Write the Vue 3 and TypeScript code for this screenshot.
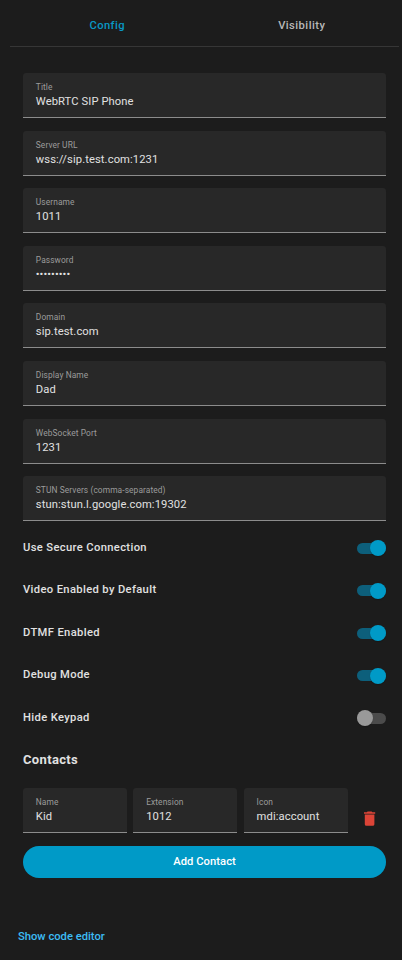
<script setup lang="ts">
import { reactive, ref } from 'vue'

interface Field { label: string; value: string; password?: boolean }
interface Toggle { label: string; on: boolean }

const tabs = ['Config', 'Visibility']
const activeTab = ref('Config')

const fields: Field[] = [
  { label: 'Title', value: 'WebRTC SIP Phone' },
  { label: 'Server URL', value: 'wss://sip.test.com:1231' },
  { label: 'Username', value: '1011' },
  { label: 'Password', value: '•••••••••', password: true },
  { label: 'Domain', value: 'sip.test.com' },
  { label: 'Display Name', value: 'Dad' },
  { label: 'WebSocket Port', value: '1231' },
  { label: 'STUN Servers (comma-separated)', value: 'stun:stun.l.google.com:19302' },
]

const toggles = reactive<Toggle[]>([
  { label: 'Use Secure Connection', on: true },
  { label: 'Video Enabled by Default', on: true },
  { label: 'DTMF Enabled', on: true },
  { label: 'Debug Mode', on: true },
  { label: 'Hide Keypad', on: false },
])

const contact: Field[] = [
  { label: 'Name', value: 'Kid' },
  { label: 'Extension', value: '1012' },
  { label: 'Icon', value: 'mdi:account' },
]
</script>

<template>
  <main class="editor">
    <nav class="tabs">
      <button
        v-for="tab in tabs"
        :key="tab"
        class="tab"
        :class="{ active: tab === activeTab }"
        @click="activeTab = tab"
      >{{ tab }}</button>
    </nav>

    <section class="form">
      <div class="fields">
        <div v-for="f in fields" :key="f.label" class="field">
          <span class="label">{{ f.label }}</span>
          <span class="value" :class="{ password: f.password }">{{ f.value }}</span>
        </div>
      </div>

      <div class="toggles">
        <div v-for="t in toggles" :key="t.label" class="toggle-row">
          <span class="toggle-label">{{ t.label }}</span>
          <button class="switch" :class="{ on: t.on }" :aria-label="t.label" @click="t.on = !t.on">
            <span class="knob"></span>
          </button>
        </div>
      </div>

      <h3 class="heading">Contacts</h3>
      <div class="contact">
        <div v-for="f in contact" :key="f.label" class="field">
          <span class="label">{{ f.label }}</span>
          <span class="value">{{ f.value }}</span>
        </div>
        <button class="delete" aria-label="Delete">
          <svg viewBox="0 0 24 24">
            <path d="M19,4H15.5L14.5,3H9.5L8.5,4H5V6H19M6,19A2,2 0 0,0 8,21H16A2,2 0 0,0 18,19V7H6V19Z" />
          </svg>
        </button>
      </div>
      <button class="add">Add Contact</button>
    </section>

    <button class="code-link">Show code editor</button>
  </main>
</template>

<style>
body {
  background: #1c1c1c;
}
</style>

<style scoped>
.editor {
  box-sizing: border-box;
  width: 402px;
  height: 960px;
  overflow: hidden;
  background: #1c1c1c;
  color: #e1e1e1;
  font-family: Roboto, sans-serif;
  font-size: 11.2px;
}

button {
  margin: 0;
  padding: 0;
  border: 0;
  background: none;
  font: inherit;
  color: inherit;
}

.tabs {
  display: flex;
  box-sizing: border-box;
  height: 47px;
  margin: 0 3px 0 10px;
  padding-top: 5px;
  border-bottom: 1px solid #363636;
}

.tab {
  flex: 1;
  font-weight: 500;
  letter-spacing: 0.45px;
  color: #b8b8b8;
}

.tab.active {
  color: #0998c5;
}

.form {
  padding: 26px 16px 0 23px;
}

.fields {
  display: flex;
  flex-direction: column;
  gap: 12.6px;
}

.field {
  display: flex;
  flex-direction: column;
  box-sizing: border-box;
  height: 45px;
  padding: 8px 12.8px 0;
  background: #282828;
  border-bottom: 1px solid #8c8c8c;
  border-radius: 3.2px 3.2px 0 0;
}

.label {
  font-size: 8.4px;
  line-height: 12px;
  letter-spacing: 0.09px;
  color: #9b9b9b;
}

.value {
  padding-top: 1px;
  line-height: 16px;
  letter-spacing: 0.1px;
}

.password {
  letter-spacing: 0.05px;
}

.toggles {
  padding-top: 5.9px;
}

.toggle-row {
  display: flex;
  align-items: center;
  justify-content: space-between;
  height: 42.5px;
}

.toggle-label {
  font-weight: 500;
  letter-spacing: 0.36px;
  padding-bottom: 2.4px;
}

.switch {
  display: flex;
  align-items: center;
  width: 28.8px;
  height: 11.2px;
  border-radius: 6px;
  background: #4b4b4b;
}

.knob {
  flex: none;
  width: 16px;
  height: 16px;
  border-radius: 50%;
  background: #999;
  box-shadow: 0 1px 1px rgba(0, 0, 0, 0.2);
}

.switch.on {
  justify-content: flex-end;
  background: #0d5f7b;
}

.switch.on .knob {
  background: #009ac7;
}

.heading {
  margin: 12.4px 0 20px;
  font-size: 13px;
  font-weight: 700;
  line-height: 16px;
  letter-spacing: 0.35px;
}

.contact {
  display: grid;
  grid-template-columns: repeat(3, 104px) 1fr;
  column-gap: 6.4px;
}

.delete {
  display: flex;
  align-items: center;
  justify-content: center;
  height: 32px;
  margin-top: 14.4px;
  padding-right: 1.2px;
}

.delete svg {
  width: 19.2px;
  height: 19.2px;
  fill: #db4437;
}

.add {
  display: block;
  width: 100%;
  height: 32px;
  margin-top: 11.8px;
  padding-bottom: 1px;
  border-radius: 16px;
  background: #009ac7;
  color: #fff;
  font-weight: 500;
  letter-spacing: 0.06px;
}

.code-link {
  display: block;
  margin: 51.2px 0 0 18px;
  line-height: 16px;
  font-weight: 500;
  color: #3dbcf4;
}
</style>
